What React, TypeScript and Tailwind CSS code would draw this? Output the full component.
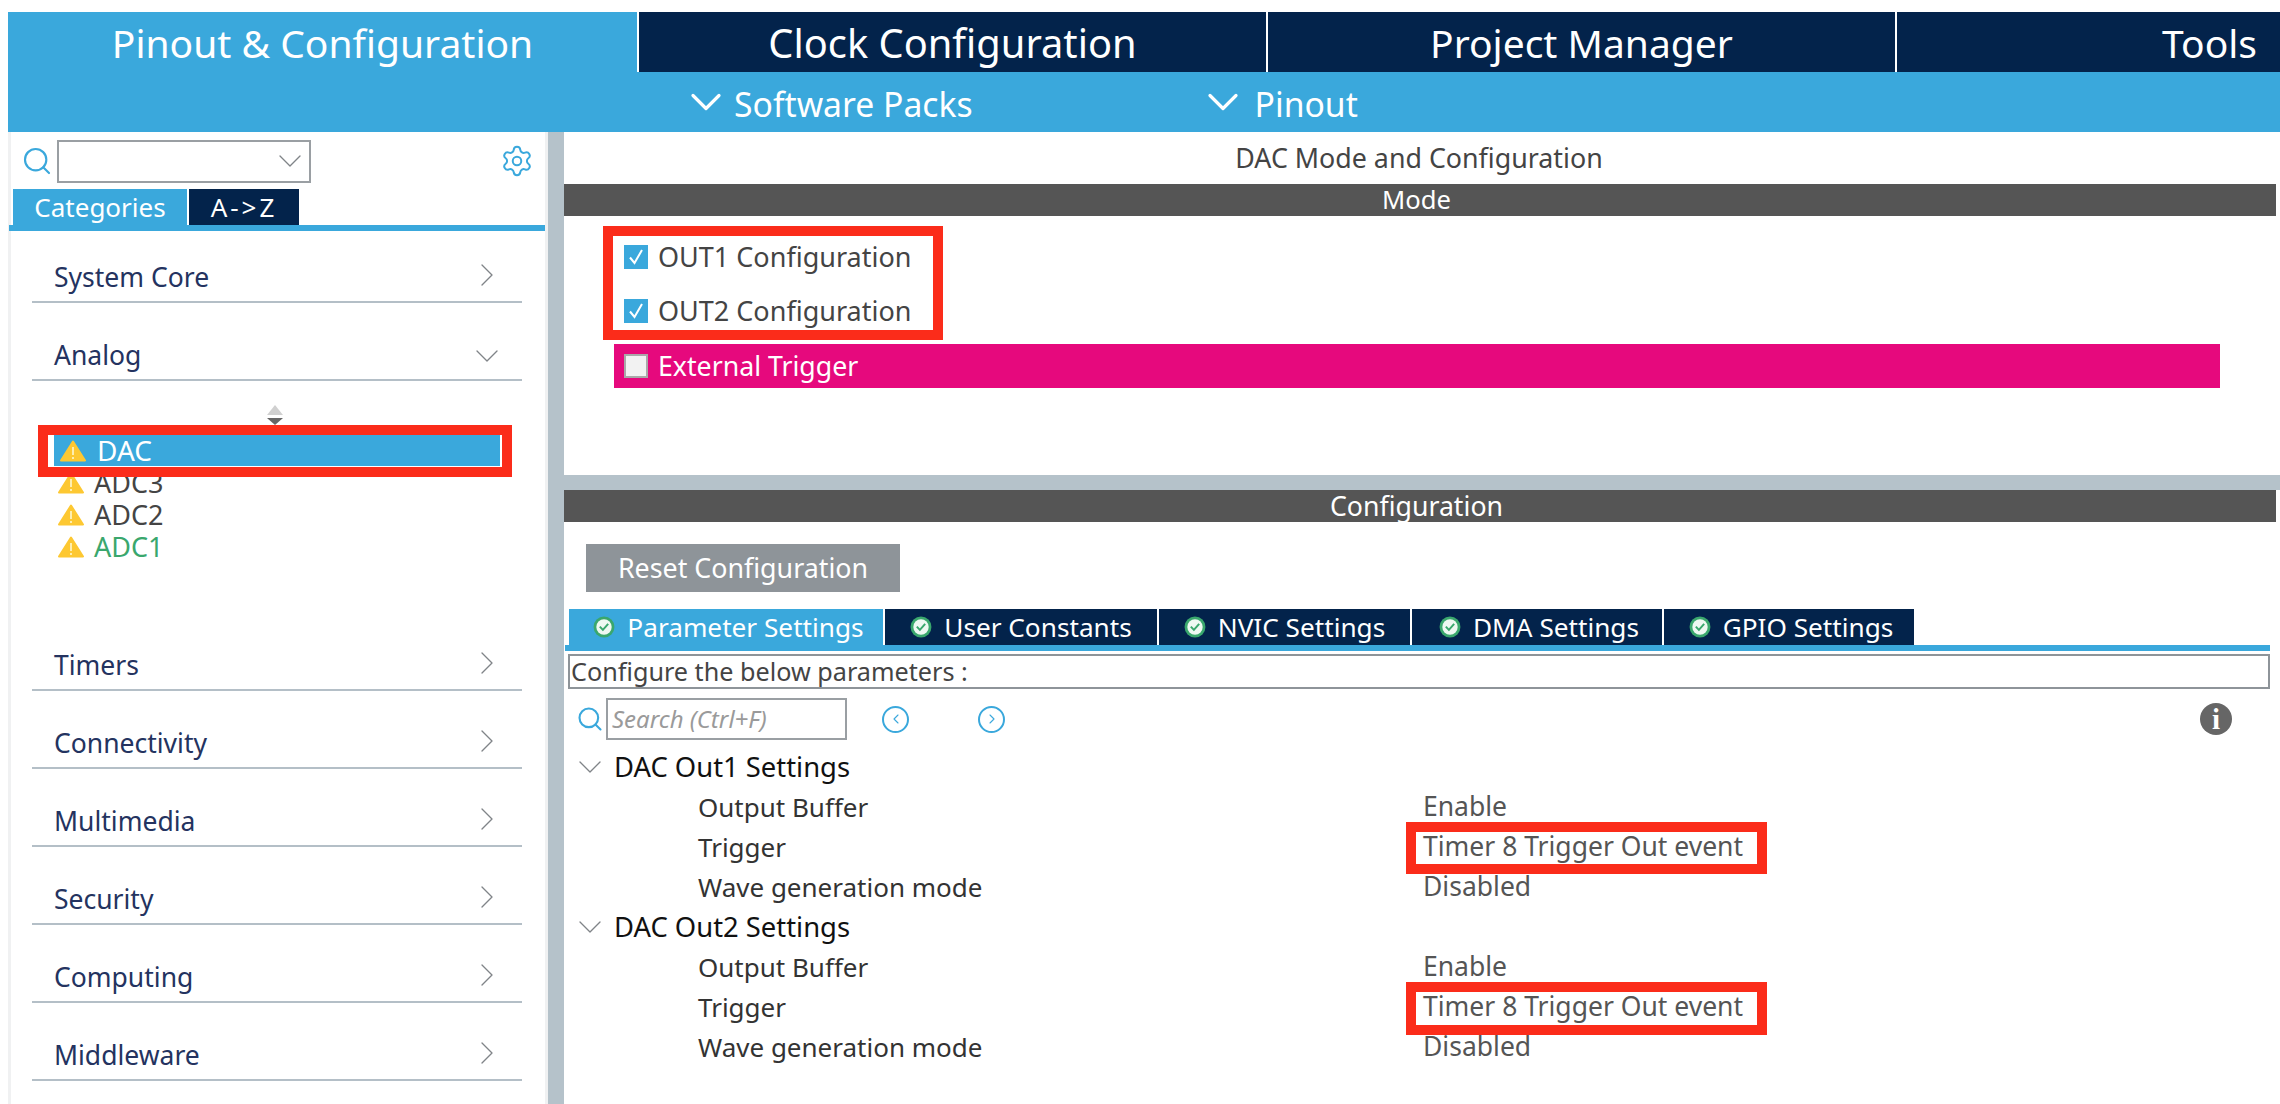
import { ChevronDown, ChevronLeft, ChevronRight, Search, Settings } from 'lucide-react';

const font = "[font-family:'Noto_Sans',sans-serif]";

const Warning = ({ className = '' }: { className?: string }) => (
  <svg viewBox="0 0 26 22" className={`w-[26px] h-[22px] shrink-0 ${className}`}>
    <path d="M13 1.5 L25 20.5 H1 Z" fill="#fdc832" stroke="#fdc832" strokeWidth="2" strokeLinejoin="round" />
    <path d="M13 7v8M13 17v2" stroke="#fdeeb0" strokeWidth="2" />
  </svg>
);

const Okay = () => (
  <svg viewBox="0 0 20 20" className="w-[22px] h-[22px] shrink-0">
    <circle cx="10" cy="10" r="9.5" fill="#3aa76d" />
    <circle cx="10" cy="10" r="7" fill="#eef8f2" />
    <path d="M6.2 9.6 9 12.6 13.8 7.2" fill="none" stroke="#3aa76d" strokeWidth="1.8" />
  </svg>
);

const Check = ({ checked }: { checked: boolean }) =>
  checked ? (
    <span className="w-6 h-6 bg-[#3aa8dc] flex items-center justify-center shrink-0">
      <svg viewBox="0 0 24 24" className="w-6 h-6">
        <path d="M6 12.5 10.5 18 18 5" fill="none" stroke="#fff" strokeWidth="2" />
      </svg>
    </span>
  ) : (
    <span className="w-6 h-6 bg-[#f2f2f2] border-2 border-[#a9a9a9] shrink-0" />
  );

const RedBox = ({ className = '' }: { className?: string }) => (
  <div className={`absolute border-[10px] border-[#fb2c1a] pointer-events-none ${className}`} />
);

const SideRow = ({ name, open, top = 'mt-[34px]' }: { name: string; open?: boolean; top?: string }) => (
  <div className={`${top} h-[44px] ml-[21px] mr-[23px] pl-[22px] pr-[27px] pb-[4px] border-b-2 border-[#b4bfc7] flex items-center justify-between text-[26.5px] text-[#243360]`}>
    <span>{name}</span>
    {open ? (
      <ChevronDown size={40} strokeWidth={0.8} className="text-[#808488] -mr-[12px] -my-[10px]" />
    ) : (
      <ChevronRight size={40} strokeWidth={0.8} className="text-[#808488] -mr-[12px] -my-[10px] -mt-[16px]" />
    )}
  </div>
);

const Param = ({ label, value }: { label: string; value: string }) => (
  <div className="h-10 flex items-center text-[26px] text-[#333]">
    <span className="w-[859px] pl-[134px]">{label}</span>
    <span className="text-[#555] text-[26.5px]">{value}</span>
  </div>
);

const Group = ({ name }: { name: string }) => (
  <div>
    <div className="h-10 flex items-center text-[27.4px] text-[#111]">
      <ChevronDown size={40} strokeWidth={0.8} className="text-[#808488] ml-[6px] mr-[4px]" />
      {name}
    </div>
    <Param label="Output Buffer" value="Enable" />
    <Param label="Trigger" value="Timer 8 Trigger Out event" />
    <Param label="Wave generation mode" value="Disabled" />
  </div>
);

export default function App() {
  const tabs = ['User Constants', 'NVIC Settings', 'DMA Settings', 'GPIO Settings'];
  const tabWidths = ['w-[272px]', 'w-[251px]', 'w-[250px] pl-[4px]', 'w-[250px] pl-[4px]'];

  return (
    <div className={`w-[2280px] h-[1104px] overflow-hidden bg-white pt-3 pl-2 ${font}`}>
      {/* top tabs */}
      <div className="flex h-[60px] text-white text-[39px]">
        <div className="w-[629px] bg-[#3aa8dc] flex items-center justify-center pt-[2px]">Pinout &amp; Configuration</div>
        <div className="w-[627px] ml-[2px] bg-[#03234b] flex items-center justify-center pt-[2px] text-[39.8px]">Clock Configuration</div>
        <div className="w-[627px] ml-[2px] bg-[#03234b] flex items-center justify-center pt-[2px]">Project Manager</div>
        <div className="flex-1 ml-[2px] bg-[#03234b] flex items-center justify-end pr-[23px] pt-[2px]">Tools</div>
      </div>
      <div className="h-[60px] bg-[#3aa8dc] flex items-center text-white text-[33.7px] pl-[672px]">
        <ChevronDown size={52} strokeWidth={1.5} />
        <span className="ml-[2px] pt-[4px]">Software Packs</span>
        <ChevronDown size={52} strokeWidth={1.5} className="ml-[224px]" />
        <span className="ml-[6px] pt-[4px]">Pinout</span>
      </div>

      <div className="flex h-[972px]">
        {/* left panel */}
        <div className="w-[540px] border-x-[3px] border-[#f0f1f2] shrink-0 relative">
          <div className="h-[57px] flex items-center pl-[11px] pr-[11px] pt-[1px]">
            <Search size={32} strokeWidth={1.6} className="text-[#3aa8dc] -ml-[1px]" />
            <div className="ml-[4px] w-[254px] h-[43px] border-2 border-[#9a9fa3] flex items-center justify-end">
              <ChevronDown size={40} strokeWidth={0.8} className="text-[#808488] -mr-[1px] -my-[10px]" />
            </div>
            <Settings size={34} strokeWidth={1.4} className="text-[#3aa8dc] ml-auto" />
          </div>
          <div className="h-[36px] flex pl-[2px] text-[26px] leading-[36px] text-white">
            <div className="w-[174px] bg-[#3aa8dc] flex items-center justify-center">Categories</div>
            <div className="w-[110px] ml-[2px] bg-[#03234b] flex items-center justify-center tracking-[3px]">A-&gt;Z</div>
          </div>
          <div className="h-[6px] bg-[#3aa8dc] -ml-[2px]" />

          <SideRow name="System Core" top="mt-[28px]" />
          <SideRow name="Analog" open />

          {/* peripheral list */}
          <div className="h-[266px] relative text-[27px] leading-[32px] text-[#444]">
            <div className="pt-[24px] flex flex-col items-center gap-[3px] pr-[6px]">
              <span className="w-0 h-0 border-x-[8px] border-x-transparent border-b-[10px] border-b-[#d0d0d0]" />
              <span className="w-0 h-0 border-x-[8px] border-x-transparent border-t-[7px] border-t-[#666]" />
            </div>
            <div className="relative mt-[10px] ml-[37px] w-[454px] h-8 pl-[6px] pr-[2px] pb-[1px] z-10 bg-white">
              <div className="h-full bg-[#3aa8dc] text-white flex items-center pl-[6px] gap-[11px] text-[28px] leading-[31px]">
                <Warning />
                DAC
              </div>
              <RedBox className="-inset-[10px]" />
            </div>
            <div className="ml-[47px]">
              {['ADC3', 'ADC2', 'ADC1'].map((adc) => (
                <div key={adc} className={`h-8 flex items-center gap-[10px] ${adc === 'ADC1' ? 'text-[#3aa76d]' : ''}`}>
                  <Warning />
                  {adc}
                </div>
              ))}
            </div>
          </div>

          <SideRow name="Timers" top="mt-0" />
          <SideRow name="Connectivity" />
          <SideRow name="Multimedia" />
          <SideRow name="Security" />
          <SideRow name="Computing" />
          <SideRow name="Middleware" />
        </div>

        <div className="w-4 bg-[#b5c2ca] shrink-0" />

        {/* right panel */}
        <div className="flex-1 flex flex-col min-w-0">
          <div className="h-[343px] shrink-0 relative">
            <div className="h-[52px] flex items-center justify-center text-[26.8px] text-[#444] pr-[6px]">DAC Mode and Configuration</div>
            <div className="h-8 bg-[#555] flex items-center justify-center text-[25.6px] text-white mr-1 pr-[7px]">Mode</div>
            <div className="pl-[60px] text-[27px] text-[#444]">
              <div className="h-[54px] mt-[14px] flex items-center gap-[10px]"><Check checked />OUT1 Configuration</div>
              <div className="h-[54px] flex items-center gap-[10px]"><Check checked />OUT2 Configuration</div>
            </div>
            <div className="ml-[50px] mr-[60px] mt-[6px] h-[44px] bg-[#e6097d] text-white text-[26.7px] flex items-center pl-[10px] gap-[10px]">
              <Check checked={false} />External Trigger
            </div>
            <RedBox className="left-[39px] top-[94px] w-[340px] h-[114px]" />
          </div>

          <div className="h-[15px] bg-[#b5c2ca] shrink-0" />

          <div className="flex-1 relative">
            <div className="h-8 bg-[#555] flex items-center justify-center text-[26.7px] text-white mr-1 pr-[7px]">Configuration</div>
            <div className="mt-[22px] ml-[22px] w-[314px] h-[48px] bg-[#8e9499] text-white text-[26.8px] flex items-center justify-center">Reset Configuration</div>

            <div className="mt-[17px] ml-[5px] h-9 flex text-[26.2px] leading-[36px] text-white">
              <div className="w-[314px] pl-[5px] bg-[#3aa8dc] flex items-center justify-center gap-[12px]"><Okay />Parameter Settings</div>
              {tabs.map((tab, i) => (
                <div key={tab} className={`${tabWidths[i]} ml-[2px] bg-[#03234b] flex items-center justify-center gap-[12px]`}><Okay />{tab}</div>
              ))}
            </div>
            <div className="h-[6px] bg-[#3aa8dc] ml-[1px] mr-[10px]" />

            <div className="mt-[3px] ml-[4px] mr-[10px] h-[35px] border-2 border-[#8e9499] flex items-center pl-[1px] text-[25.2px] text-[#444]">
              Configure the below parameters :
            </div>

            <div className="h-[52px] mt-[4px] flex items-center pl-[12px] pr-[48px]">
              <Search size={28} strokeWidth={1.8} className="text-[#3aa8dc]" />
              <div className="ml-[2px] w-[241px] h-[42px] border-2 border-[#9a9fa3] flex items-center pl-[4px] italic text-[24px] text-[#9a9a9a]">Search (Ctrl+F)</div>
              <span className="ml-[35px] w-[27px] h-[27px] rounded-full border-2 border-[#3aa8dc] flex items-center justify-center">
                <ChevronLeft size={16} strokeWidth={1.6} className="text-[#3aa8dc]" />
              </span>
              <span className="ml-[69px] w-[27px] h-[27px] rounded-full border-2 border-[#3aa8dc] flex items-center justify-center">
                <ChevronRight size={16} strokeWidth={1.6} className="text-[#3aa8dc]" />
              </span>
              <span className="ml-auto w-8 h-8 rounded-full bg-[#666] text-white font-bold text-[29px] leading-none flex items-center justify-center [font-family:'Liberation_Serif',serif]">i</span>
            </div>

            <div className="mt-[2px]">
              <Group name="DAC Out1 Settings" />
              <Group name="DAC Out2 Settings" />
            </div>

            <RedBox className="left-[842px] top-[332px] w-[361px] h-[52px]" />
            <RedBox className="left-[842px] top-[492px] w-[361px] h-[53px]" />
          </div>
        </div>
      </div>
    </div>
  );
}
